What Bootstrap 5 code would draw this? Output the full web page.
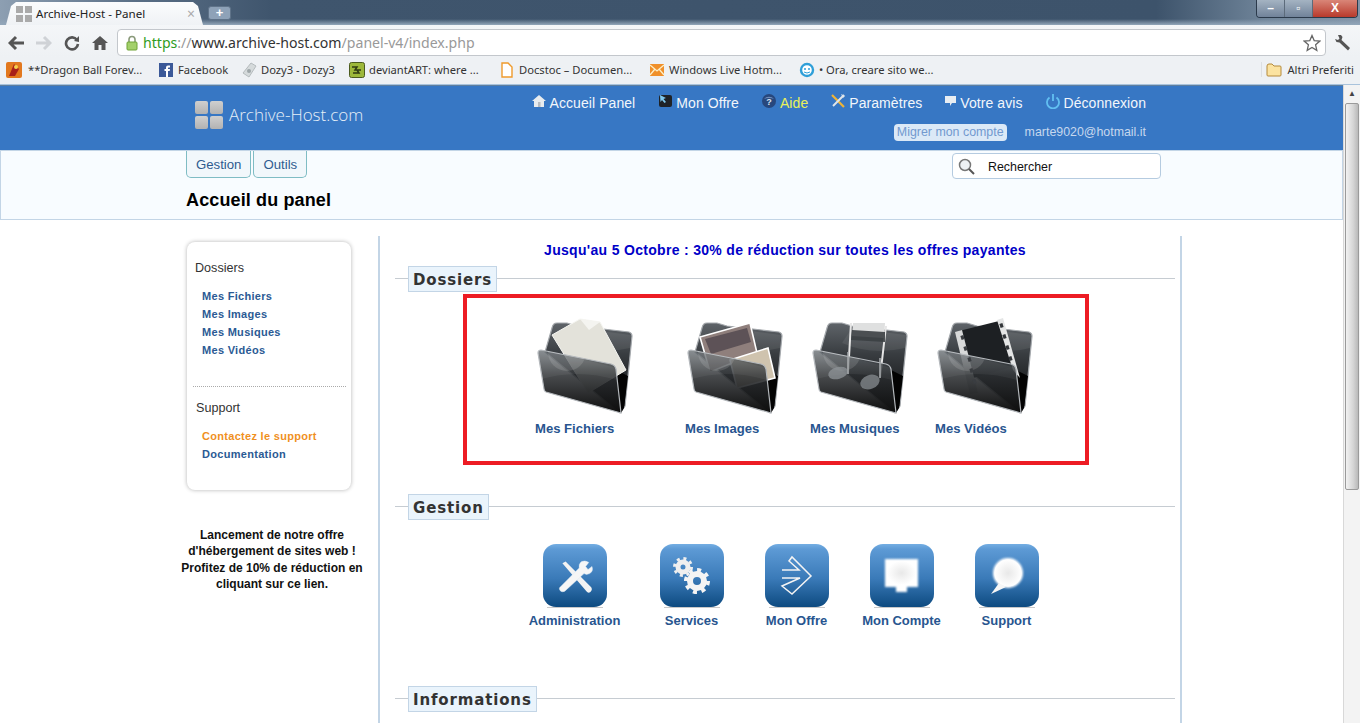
<!DOCTYPE html>
<html lang="fr">
<head>
  <meta charset="UTF-8">
  <meta name="viewport" content="width=device-width, initial-scale=1.0">
  <title>Archive-Host - Panel</title>
  <link href="https://cdn.jsdelivr.net/npm/bootstrap@5.3.1/dist/css/bootstrap.min.css" rel="stylesheet">
  <style>
    html, body { height: 723px; overflow: hidden; }
    body { font-family: "Liberation Sans", Arial, sans-serif; background: #fff; color: #000; }
    a { text-decoration: none; }

    /* browser frame */
    .tabstrip { height: 25px; background: linear-gradient(90deg, #8d9fb2 0, #5a6f86 10%, #3f556d 20%, #3d536b 85%, #6f8499 93%, #8194a8 100%); position: relative; }
    .tabstrip::after { content: ""; position: absolute; left: 0; right: 0; bottom: 0; height: 6px; background: linear-gradient(#3f556d00, #93a7ba); }
    .chrome-tab { width: 197px; height: 23px; margin: 2px 0 0 6px; background: linear-gradient(#fbfcfd, #eff2f5); clip-path: polygon(0 100%, 5px 4px, 10px 0, calc(100% - 10px) 0, calc(100% - 5px) 4px, 100% 100%); font: 11.6px "Noto Sans", sans-serif; color: #222; z-index: 1; white-space: nowrap; }
    .chrome-tab svg { margin-left: 10px; }
    .chrome-tab .tab-title { margin-left: 4px; }
    .chrome-tab .tab-x { margin-left: auto; margin-right: 8px; color: #aaa; font-size: 14px; }
    .tab-new { width: 23px; height: 14px; margin: 6px 0 0 5px; background: #8ea2b8; border: 1px solid #5f7389; border-radius: 3px; color: #fff; font: bold 13px/11px "Liberation Sans", sans-serif; text-align: center; z-index: 1; }
    .win-btns { margin-left: auto; margin-right: 2px; height: 18px; width: 102px; border: 1px solid #2b3a4b; border-top: 0; border-radius: 0 0 4px 4px; overflow: hidden; z-index: 1; }
    .win-btns > div { height: 100%; background: linear-gradient(#a4b3c2, #71839a); border-right: 1px solid #5c6b7b; color: #fff; text-align: center; font: bold 12px/16px "Liberation Sans", sans-serif; }
    .win-btns .win-small { width: 28px; }
    .win-btns .win-close { flex-grow: 1; border: 0; background: linear-gradient(#d98678, #b8392b); }
    .toolbar { height: 32px; background: linear-gradient(#f4f6f8, #eef1f4); padding: 4px 3px 1px 8px; }
    .ms-home { margin-left: 12px; }
    .omnibox { height: 27px; width: 1209px; margin-left: 9px; background: #fff; border: 1px solid #c3c7cc; border-radius: 4px; font: 14.1px "Noto Sans", sans-serif; color: #999; padding: 0 4px 0 7px; white-space: nowrap; }
    .omnibox .url-green { color: #2e9c22; }
    .omnibox .url-dark { color: #333; }
    .bookmarks { height: 28px; background: #eef1f4; border-bottom: 1px solid #a9c3dc; font: 11.2px "Noto Sans", sans-serif; color: #333; padding: 0 0 2px 6px; white-space: nowrap; }
    .bm-item { position: relative; padding-left: 20px; flex-shrink: 0; }
    .bm-item svg { position: absolute; left: 0; top: 50%; margin-top: -8px; }
    .bm-first { width: 152px; padding-left: 22px; }
    .bm-fb { width: 83px; }
    .bm-dozy { width: 108px; }
    .bm-long { width: 150px; }
    .bm-last { margin-left: auto; margin-right: 6px; border-left: 1px solid #dcdfe3; padding-left: 4px; display: flex; gap: 5px; align-items: center; }

    .page-wrap { height: 638px; }
    .page-main { width: 1343px; overflow: hidden; }
    .fake-scroll { width: 17px; background: #f3f3f3; border-left: 1px solid #d8d8d8; }
    .scroll-up { height: 18px; font-size: 8px; line-height: 18px; text-align: center; color: #444; }
    .scroll-thumb { height: 387px; margin: 0 1px; border: 1px solid #9a9a9a; border-radius: 2px; background: linear-gradient(90deg, #f2f2f2, #d5d5d5 60%, #b9b9b9); }

    /* site header */
    .site-head { height: 66px; background: #3777c4; border-top: 1px solid #5f7f9f; border-bottom: 1px solid #c3d5e6; padding-left: 195px; }
    .logo-grid { display: grid; grid-template-columns: 13px 13px; gap: 2px; margin-top: 15px; height: 28px; }
    .logo-grid i { background: linear-gradient(#cfcfcf, #b2b2b2); border-radius: 2px; }
    .logo-text { margin: 14px 0 0 6px; font: 300 17px/30px "Open Sans", sans-serif; color: #e6eff8; }
    .head-right { margin-left: auto; margin-right: 197px; }
    .top-menu { margin-top: 7px; gap: 22px; font-size: 14px; letter-spacing: .07px; line-height: 20px; color: #fff; }
    .top-menu a { color: #f2f6fb; display: flex; gap: 3px; align-items: flex-start; white-space: nowrap; }
    .top-menu a.aide-link { color: #e9f05a; }
    .top-menu svg { margin-top: 0; }
    .sub-menu { margin-top: 11px; gap: 18px; font-size: 12.4px; line-height: 17px; color: #c6d8ee; }
    .migrate-pill { background: #dbe9f7; color: #7299cf; padding: 0 3px; border-radius: 4px; }

    .sub-head { height: 69px; background: #f8fcff; border: 1px solid #c3d5e6; border-top: 0; padding-left: 185px; }
    .tab-btn { height: 27px; padding: 5px 9px 0; font-size: 13.2px; line-height: 17px; color: #2e5b8f; background: #f1f7fb; border: 1px solid #7fbcc4; border-top: 0; border-radius: 0 0 5px 5px; }
    .tab-gap { gap: 2px; }
    .page-title { font-size: 18px; font-weight: bold; letter-spacing: .13px; margin: 10px 0 0; line-height: 24px; }
    .search-box { width: 209px; height: 26px; margin: 2px 181px 0 auto; background: #fff; border: 1px solid #b5cbe0; border-radius: 4px; font-size: 12.4px; color: #111; gap: 11px; padding-left: 4px; padding-top: 2px; }

    /* body columns */
    .col-left { width: 193px; margin: 22px 0 0 183px; flex-shrink: 0; }
    .side-card { width: 164px; height: 248px; margin-left: 4px; border: 0; border-radius: 8px; box-shadow: 0 0 4px rgba(0,0,0,.3); background: #fff; padding: 17px 8px; }
    .side-title { font-size: 12.6px; line-height: 16px; color: #333; padding-top: 1px; }
    .side-list { margin: 11px 0 0 7px; font-size: 11px; font-weight: bold; letter-spacing: .3px; line-height: 18px; }
    .side-list a { display: block; color: #2b5a94; }
    .side-list a.support-link { color: #f0901e; }
    .side-sep { border-top: 1px dotted #aaa; margin: 27px -3px 12px -2px; }
    .side-title.indent { padding-left: 1px; }
    .promo-text { margin: 37px 0 0 -2px; width: 182px; text-align: center; font-size: 12px; font-weight: bold; line-height: 16.4px; color: #111; white-space: nowrap; }

    .col-main { width: 804px; height: 487px; margin: 16px 0 0 2px; border-left: 2px solid #c3d5e6; border-right: 2px solid #c3d5e6; padding-left: 15px; }
    .promo-line { text-align: center; font-size: 14px; font-weight: bold; letter-spacing: .31px; color: #0000c8; line-height: 18px; margin: 5px 0 7px; padding-right: 5px; }
    .sec-head { height: 26px; }
    .sec-head .sec-line { height: 1px; background: #c6ccd2; margin-bottom: 2px; }
    .sec-head .sec-line-a { width: 13px; }
    .sec-head .sec-line-b { width: auto; flex-grow: 1; margin-right: 5px; }
    .sec-label { height: 26px; background: #eaf4fc; border: 1px solid #c3d5e6; padding: 0 4px; font: bold 15px/26px "DejaVu Sans", sans-serif; color: #333; letter-spacing: .85px; }
    .red-frame { width: 626px; height: 171px; margin: 2px 0 29px 68px; border: 4px solid #ed1c24; padding: 20px 0 0 68px; }
    .folder-item { width: 125px; }
    .folder-item.wide { width: 150px; }
    .folder-item svg { display: block; margin-left: 2px; }
    .item-label { font-size: 13px; font-weight: bold; color: #28558f; line-height: 17px; white-space: nowrap; }
    .folder-item .item-label { margin-top: 6px; font-size: 13.1px; }
    .tool-row { margin: 24px 0 32px 127px; height: 110px; }
    .tool-item { width: 105px; text-align: center; }
    .tool-item.first { margin-right: 12px; }
    .tool-icon { width: 64px; height: 64px; margin: 0 auto 4px; display: block; }
  </style>
</head>
<body>

<svg width="0" height="0" class="position-absolute">
  <defs>
    <linearGradient id="gBack" x1="0" y1="0" x2="0" y2="1"><stop offset="0" stop-color="#5f6469"/><stop offset=".35" stop-color="#383c40"/><stop offset="1" stop-color="#060606"/></linearGradient>
    <linearGradient id="gFront" x1="0" y1="0" x2="0" y2="1"><stop offset="0" stop-color="#596065" stop-opacity=".74"/><stop offset=".4" stop-color="#2a2d30" stop-opacity=".86"/><stop offset="1" stop-color="#0e0e0e"/></linearGradient>
    <linearGradient id="gTool" x1="0" y1="0" x2="0" y2="1"><stop offset="0" stop-color="#74aee3"/><stop offset=".08" stop-color="#5d9ad5"/><stop offset=".55" stop-color="#3a7ab8"/><stop offset="1" stop-color="#0d4a80"/></linearGradient>
    <radialGradient id="gGlow"><stop offset="0" stop-color="#e8e8e8"/><stop offset="1" stop-color="#ffffff"/></radialGradient>
    <filter id="fGlow" x="-20%" y="-20%" width="140%" height="140%"><feGaussianBlur stdDeviation=".9"/></filter>
    <clipPath id="cFront"><path d="M4 32 L74 46 Q78 47 79 51 L84 95 L9 74 Q7 73 7 71 L1 35 Q1 32 4 32 Z"/></clipPath>
    <symbol id="folderBack" viewBox="0 0 96 96">
      <path d="M20 5 Q16 5 15 10 L8 34 L83 95 L88 88 L95 18 Q95 15 92 14 L40 8 L30 5 Z" fill="url(#gBack)" stroke="#a5a9ad" stroke-width="1.2"/>
      <path d="M40 10 L94 17 L93 30 Q60 38 30 25 Z" fill="#fff" opacity=".07"/>
      <path d="M84 95 L79 52 L91 58 L87 90 Z" fill="#030303"/>
    </symbol>
    <symbol id="folderFront" viewBox="0 0 96 96">
      <path d="M4 32 L74 46 Q78 47 79 51 L84 95 L9 74 Q7 73 7 71 L1 35 Q1 32 4 32 Z" fill="url(#gFront)" stroke="#b4b8bc" stroke-width="1.2"/>
      <g clip-path="url(#cFront)">
        <circle cx="30" cy="34" r="19" fill="#fff" opacity=".13"/>
        <path d="M1 62 Q40 50 80 62 V50 L1 30 Z" fill="#fff" opacity=".05"/>
      </g>
    </symbol>
    <symbol id="toolBase" viewBox="0 0 64 64">
      <rect x="0" y="0" width="64" height="63" rx="13" fill="url(#gTool)"/>
      <path d="M4 63 H60 V64 H4 Z" fill="#c9c9c9"/>
    </symbol>
  </defs>
</svg>

<!-- barre du navigateur -->
<div class="tabstrip d-flex align-items-start">
  <div class="chrome-tab d-flex align-items-center">
    <svg width="16" height="16" viewBox="0 0 16 16"><path d="M0 0h7v7H0zM9 0h7v7H9zM0 9h7v7H0zM9 9h7v7H9z" fill="#aaa"/></svg>
    <span class="tab-title">Archive-Host - Panel</span>
    <span class="tab-x">×</span>
  </div>
  <div class="tab-new">+</div>
  <div class="win-btns d-flex">
    <div class="win-small">–</div>
    <div class="win-small">▫</div>
    <div class="win-close">X</div>
  </div>
</div>
<div class="toolbar d-flex align-items-center">
  <svg width="18" height="16" viewBox="0 0 18 16"><path d="M8 2 L2 8 L8 14 M2 8 H16" fill="none" stroke="#555" stroke-width="3"/></svg>
  <svg class="ms-2" width="18" height="16" viewBox="0 0 18 16"><path d="M10 2 L16 8 L10 14 M16 8 H2" fill="none" stroke="#cfd2d6" stroke-width="3"/></svg>
  <svg class="ms-home" width="16" height="16" viewBox="0 0 16 16"><path d="M13 5 A6 6 0 1 0 14 9" fill="none" stroke="#555" stroke-width="2.6"/><path d="M10 6 L15 7 L15 1 Z" fill="#555"/></svg>
  <svg class="ms-home" width="16" height="16" viewBox="0 0 16 16"><path d="M8 1 L16 8 H13.5 V15 H9.5 V10 H6.5 V15 H2.5 V8 H0 Z" fill="#555"/></svg>
  <div class="omnibox d-flex align-items-center">
    <svg width="14" height="16" viewBox="0 0 14 16"><path d="M4 7 V4.5 A3 3 0 0 1 10 4.5 V7" fill="none" stroke="#8a9a7a" stroke-width="1.6"/><rect x="2" y="7" width="10" height="8" rx="1" fill="#a3d06a" stroke="#6fa336"/></svg>
    <span class="ms-1"><span class="url-green">https</span>://<span class="url-dark">www.archive-host.com</span>/panel-v4/index.php</span>
    <svg class="ms-auto" width="18" height="18" viewBox="0 0 18 18"><path d="M9 1.5 L11.2 6.6 L16.8 7.1 L12.6 10.8 L13.8 16.3 L9 13.4 L4.2 16.3 L5.4 10.8 L1.2 7.1 L6.8 6.6 Z" fill="#fff" stroke="#666" stroke-width="1.3"/></svg>
  </div>
  <svg class="ms-2" width="18" height="18" viewBox="0 0 18 18"><path d="M4 1 L7 1 L8.5 3 L7.5 6 L16 14 L14 16.5 L5.5 8.5 L2.5 8 L1 5 L4 6 L5.5 4.5 Z" fill="#555"/></svg>
</div>
<div class="bookmarks d-flex align-items-center">
  <a class="bm-item bm-first text-reset"><svg width="16" height="16" viewBox="0 0 16 16"><rect width="16" height="16" rx="2" fill="#e2781e"/><path d="M3 14 L8 2 L13 7 L9 14 Z" fill="#a8201a"/><circle cx="10" cy="5" r="2" fill="#f5d24c"/></svg>**Dragon Ball Forev...</a>
  <a class="bm-item bm-fb text-reset"><svg width="16" height="16" viewBox="0 0 16 16"><rect x="1" y="1" width="14" height="14" fill="#3b5998"/><path d="M8 15 V9 H6.5 V7 H8 V5.5 Q8 3.5 10 3.5 H12 V5.5 H10.5 Q10 5.5 10 6 V7 H12 L11.7 9 H10 V15 Z" fill="#fff"/></svg>Facebook</a>
  <a class="bm-item bm-dozy text-reset"><svg width="16" height="16" viewBox="0 0 16 16"><path d="M2 11 L10 1 L15 4 L8 15 Z" fill="#d5dadb" stroke="#b5bbbd"/><circle cx="8" cy="9" r="2" fill="#9ea6a8"/></svg>Dozy3 - Dozy3</a>
  <a class="bm-item bm-long text-reset"><svg width="16" height="16" viewBox="0 0 16 16"><rect x=".5" y=".5" width="15" height="15" rx="2" fill="#9db83a" stroke="#4b5a1e"/><path d="M3 5 H8 L6 8 H12 M8 8 L10 11 H4" fill="none" stroke="#2f3a12" stroke-width="1.5"/></svg>deviantART: where ...</a>
  <a class="bm-item bm-long text-reset"><svg width="16" height="16" viewBox="0 0 16 16"><path d="M3 1 H9 L13 5 V15 H3 Z" fill="#fff" stroke="#ef9b2d" stroke-width="1.4"/></svg>Docstoc – Documen...</a>
  <a class="bm-item bm-long text-reset"><svg width="16" height="16" viewBox="0 0 16 16"><rect x="1" y="2" width="14" height="12" fill="#f0902a"/><path d="M1 3 L8 9 L15 3 M1 13 L6 7 M15 13 L10 7" fill="none" stroke="#fdf0c8" stroke-width="1.3"/></svg>Windows Live Hotm...</a>
  <a class="bm-item text-reset"><svg width="16" height="16" viewBox="0 0 16 16"><circle cx="8" cy="8" r="6" fill="#fff" stroke="#2f9fd8" stroke-width="2.4"/><circle cx="6" cy="7" r="1" fill="#2f9fd8"/><circle cx="10" cy="7" r="1" fill="#2f9fd8"/><path d="M5 10 Q8 12 11 10" fill="none" stroke="#2f9fd8"/></svg>• Ora, creare sito we...</a>
  <div class="bm-last">
    <svg width="16" height="14" viewBox="0 0 16 14"><path d="M1 3 Q1 1 3 1 H6 L8 3 H14 Q15 3 15 4 V12 Q15 13 14 13 H2 Q1 13 1 12 Z" fill="#fbe3a1" stroke="#b58a3b"/></svg>
    <span>Altri Preferiti</span>
  </div>
</div>

<div class="page-wrap d-flex">
  <div class="page-main">

    <!-- entete du site -->
    <header class="site-head d-flex">
      <div class="logo-grid"><i></i><i></i><i></i><i></i></div>
      <div class="logo-text">Archive-Host.com</div>
      <div class="head-right d-flex flex-column align-items-end">
        <nav class="top-menu d-flex">
          <a href="#"><svg width="16" height="16" viewBox="0 0 16 16"><path d="M8 2 L15 8 H13 V14 H3 V8 H1 Z" fill="#e8ecef"/><rect x="7" y="9" width="2.5" height="5" fill="#b8bcc0"/></svg>Accueil Panel</a>
          <a href="#"><svg width="16" height="16" viewBox="0 0 16 16"><rect x="2" y="2" width="13" height="12" rx="2" fill="#1f2226"/><path d="M3 2 L9 5 L6.5 6 L9 9 L7.5 10 L5 7 L3.5 9 Z" fill="#7fc8ee"/></svg>Mon Offre</a>
          <a href="#" class="aide-link"><svg width="16" height="16" viewBox="0 0 16 16"><circle cx="8" cy="8" r="7" fill="#27477d"/><path d="M3 6 A6 5 0 0 1 13 6 Q8 4 3 6 Z" fill="#6f8cba"/><text x="8" y="11.5" font-size="9" font-weight="bold" text-anchor="middle" fill="#dfe7f2" font-family="Liberation Sans, sans-serif">?</text></svg>Aide</a>
          <a href="#"><svg width="16" height="16" viewBox="0 0 16 16"><path d="M2 2 L14 14" stroke="#f0b437" stroke-width="2.2"/><path d="M14 2 L3 13" stroke="#dfe5ea" stroke-width="2"/><path d="M11 1 L15 3 L13 5 Z" fill="#dfe5ea"/></svg>Paramètres</a>
          <a href="#"><svg width="13" height="16" viewBox="0 0 13 16"><path d="M1 3 H12 V10 H8 L6 13 V10 H1 Z" fill="#e8edf2"/></svg>Votre avis</a>
          <a href="#"><svg width="16" height="16" viewBox="0 0 16 16"><path d="M4.5 4.5 A6 6 0 1 0 11.5 4.5" fill="none" stroke="#62c0f2" stroke-width="1.8"/><path d="M8 1 V8" stroke="#62c0f2" stroke-width="1.8"/></svg>Déconnexion</a>
        </nav>
        <div class="sub-menu d-flex">
          <a href="#" class="migrate-pill">Migrer mon compte</a>
          <span>marte9020@hotmail.it</span>
        </div>
      </div>
    </header>

    <div class="sub-head d-flex">
      <div>
        <div class="d-flex tab-gap">
          <a href="#" class="tab-btn">Gestion</a>
          <a href="#" class="tab-btn">Outils</a>
        </div>
        <h1 class="page-title">Accueil du panel</h1>
      </div>
      <div class="search-box d-flex align-items-center">
        <svg width="20" height="20" viewBox="0 0 20 20"><circle cx="8" cy="8" r="5.5" fill="#eef1f4" stroke="#777" stroke-width="1.5"/><path d="M12 12 L17 17" stroke="#555" stroke-width="2"/></svg>
        <span>Rechercher</span>
      </div>
    </div>

    <div class="d-flex">
      <!-- colonne gauche -->
      <aside class="col-left">
        <div class="card side-card">
          <div class="side-title">Dossiers</div>
          <div class="side-list">
            <a href="#">Mes Fichiers</a>
            <a href="#">Mes Images</a>
            <a href="#">Mes Musiques</a>
            <a href="#">Mes Vidéos</a>
          </div>
          <div class="side-sep"></div>
          <div class="side-title indent">Support</div>
          <div class="side-list">
            <a href="#" class="support-link">Contactez le support</a>
            <a href="#">Documentation</a>
          </div>
        </div>
        <p class="promo-text">Lancement de notre offre<br>d'hébergement de sites web !<br>Profitez de 10% de réduction en<br>cliquant sur ce lien.</p>
      </aside>

      <!-- contenu -->
      <main class="col-main">
        <div class="promo-line">Jusqu'au 5 Octobre : 30% de réduction sur toutes les offres payantes</div>

        <div class="sec-head d-flex align-items-center">
          <div class="sec-line sec-line-a"></div><div class="sec-label">Dossiers</div><div class="sec-line sec-line-b"></div>
        </div>
        <div class="red-frame d-flex">
          <a href="#" class="folder-item wide">
            <svg width="96" height="96" viewBox="0 0 96 96">
              <use href="#folderBack"/>
              <path d="M15 17 L43 1 L63 4 L89 52 L51 75 Z" fill="#e3e2da" stroke="#f6f6f2"/>
              <path d="M43 1 L63 4 L52 12 Z" fill="#f4f4f0"/>
              <use href="#folderFront"/>
            </svg>
            <div class="item-label">Mes Fichiers</div>
          </a>
          <a href="#" class="folder-item">
            <svg width="96" height="96" viewBox="0 0 96 96">
              <use href="#folderBack"/>
              <path d="M13 19 L63 5 L70 35 L23 54 Z" fill="#8f7f7c" stroke="#fff" stroke-width="1.6"/>
              <path d="M18 21 L60 10 L64 24 L24 36 Z" fill="#5d5257"/>
              <path d="M43 42 L81 30 L88 60 L50 70 Z" fill="#cfc3ae" stroke="#fff" stroke-width="1.6"/>
              <use href="#folderFront"/>
            </svg>
            <div class="item-label">Mes Images</div>
          </a>
          <a href="#" class="folder-item">
            <svg width="96" height="96" viewBox="0 0 96 96">
              <use href="#folderBack"/>
              <path d="M41 5 L73 5 L72 20 L40 18 Z" fill="#dfe0e0"/>
              <path d="M39 5 L36 56 M74 8 L68 60" stroke="#e6e6e6" stroke-width="2" fill="none"/>
              <path d="M40 12 L73 14 L73 24 L39 22 Z" fill="#3b3f43" opacity=".9"/>
              <use href="#folderFront"/>
              <ellipse cx="26" cy="55" rx="10" ry="6" fill="#8f9498" opacity=".75" transform="rotate(-15 26 55)"/>
              <ellipse cx="58" cy="64" rx="10" ry="7" fill="#8f9498" opacity=".7" transform="rotate(-20 58 64)"/>
              <path d="M36 34 L36 56 M68 40 L68 60" stroke="#a9adb0" stroke-width="1.5"/>
            </svg>
            <div class="item-label">Mes Musiques</div>
          </a>
          <a href="#" class="folder-item">
            <svg width="96" height="96" viewBox="0 0 96 96">
              <use href="#folderBack"/>
              <path d="M22 13 L62 3 L78 48 L36 60 Z" fill="#1d2023"/>
              <path d="M60 2 L66 0 L83 60 L76 52 Z" fill="#e4e5e5"/>
              <path d="M63 8 L66 7 M66 19 L69 18 M69 30 L72 29 M72 41 L75 40" stroke="#33363a" stroke-width="4"/>
              <path d="M18 14 L25 12 L41 75 L33 76 Z" fill="#d8d9d9"/>
              <use href="#folderFront"/>
              <path d="M24 20 L27 19 M27 31 L30 30 M31 42 L34 41 M33 53 L36 52 M36 64 L39 63" stroke="#3a3d41" stroke-width="4"/>
            </svg>
            <div class="item-label">Mes Vidéos</div>
          </a>
        </div>

        <div class="sec-head d-flex align-items-center">
          <div class="sec-line sec-line-a"></div><div class="sec-label">Gestion</div><div class="sec-line sec-line-b"></div>
        </div>
        <div class="tool-row d-flex">
          <a href="#" class="tool-item first">
            <svg class="tool-icon" viewBox="0 0 64 64">
              <use href="#toolBase"/>
              <g transform="translate(6.6 6.4) scale(.8)">
                <path d="M16 16 L20 14 L52 46 Q54 49 51 52 Q48 54 46 51 Z" fill="#f3f3f3"/>
                <path d="M49 15 L45 20 L48 24 L53 20 Q55 26 50 29 Q46 31 43 29 L19 51 Q15 53 13 50 Q11 47 14 45 L37 22 Q36 17 40 14 Q44 12 49 15 Z" fill="#f6f6f6" stroke="#dceaf6" stroke-width=".6"/>
              </g>
            </svg>
            <div class="item-label">Administration</div>
          </a>
          <a href="#" class="tool-item">
            <svg class="tool-icon" viewBox="0 0 64 64">
              <use href="#toolBase"/>
              <circle cx="23" cy="23" r="5" fill="none" stroke="#efefef" stroke-width="5"/>
              <circle cx="23" cy="23" r="8.5" fill="none" stroke="#efefef" stroke-width="3" stroke-dasharray="3 3.7"/>
              <circle cx="37" cy="37" r="7" fill="none" stroke="#f4f4f4" stroke-width="6"/>
              <circle cx="37" cy="37" r="11" fill="none" stroke="#f4f4f4" stroke-width="4" stroke-dasharray="4 4.6"/>
            </svg>
            <div class="item-label">Services</div>
          </a>
          <a href="#" class="tool-item">
            <svg class="tool-icon" viewBox="0 0 64 64">
              <use href="#toolBase"/>
              <path d="M17 26 H34 L24 17 L27 13 L46 32 L27 50 L17 42 L35 34 H17" fill="none" stroke="#f4f4f4" stroke-width="1.5"/>
            </svg>
            <div class="item-label">Mon Offre</div>
          </a>
          <a href="#" class="tool-item">
            <svg class="tool-icon" viewBox="0 0 64 64">
              <use href="#toolBase"/>
              <path d="M15 15 H48 V43 H37 V48 H26 V43 H15 Z" fill="#fff" filter="url(#fGlow)"/>
              <path d="M17 17 H46 V41 H17 Z" fill="url(#gGlow)"/>
            </svg>
            <div class="item-label">Mon Compte</div>
          </a>
          <a href="#" class="tool-item">
            <svg class="tool-icon" viewBox="0 0 64 64">
              <use href="#toolBase"/>
              <circle cx="33" cy="29" r="15" fill="#fff" filter="url(#fGlow)"/>
              <circle cx="33" cy="29" r="13.5" fill="url(#gGlow)"/>
              <path d="M24 39 L16 50 L31 43 Z" fill="#f6f6f6"/>
            </svg>
            <div class="item-label">Support</div>
          </a>
        </div>

        <div class="sec-head d-flex align-items-center">
          <div class="sec-line sec-line-a"></div><div class="sec-label">Informations</div><div class="sec-line sec-line-b"></div>
        </div>
      </main>
    </div>
  </div>

  <div class="fake-scroll">
    <div class="scroll-up">▲</div>
    <div class="scroll-thumb"></div>
  </div>
</div>

<script src="https://cdn.jsdelivr.net/npm/bootstrap@5.3.1/dist/js/bootstrap.bundle.min.js"></script>
</body>
</html>
